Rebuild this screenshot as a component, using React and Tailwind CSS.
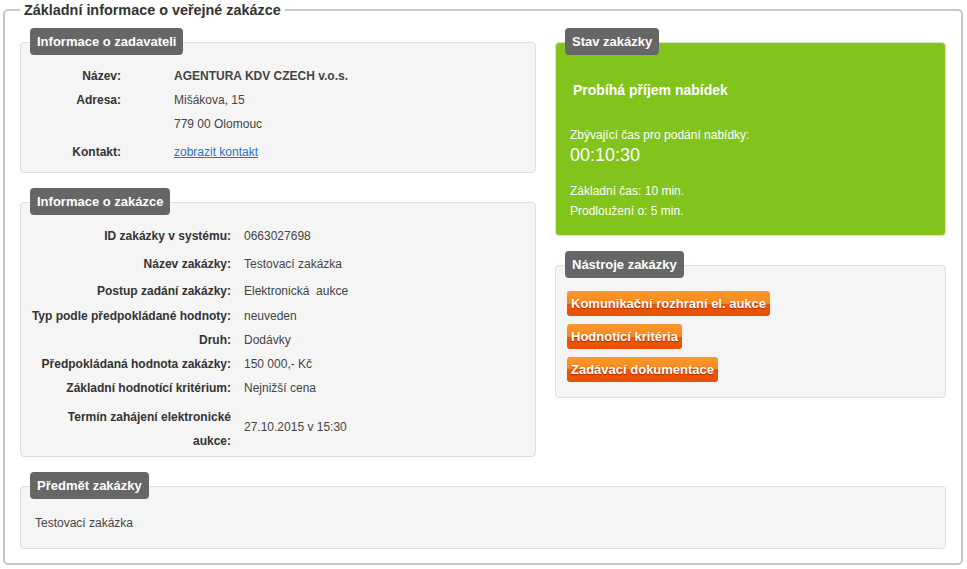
function Tab({ children }) {
  return (
    <div className="-mt-[15px] ml-[9px] block h-[27px] w-fit rounded-[4px] bg-[#666666] px-[7px] text-[13px] font-bold leading-[27px] text-white">
      {children}
    </div>
  );
}

function Panel({ title, className = "", children }) {
  return (
    <div className={`rounded-[4px] border border-[#dfdfdf] bg-[#f5f5f5] ${className}`}>
      <Tab>{title}</Tab>
      {children}
    </div>
  );
}

function Row({ label, children, labelW, gap, className = "" }) {
  return (
    <div className={`flex items-center ${className}`}>
      <div className={`shrink-0 text-right font-bold text-[#333] ${labelW}`}>{label}</div>
      <div className={`text-[#444] ${gap}`}>{children}</div>
    </div>
  );
}

function Btn({ children }) {
  return (
    <div className="h-[25px] w-fit rounded-[3px] bg-[linear-gradient(to_bottom,#fa9a2c_0%,#f7871f_50%,#ee5705_50%,#ea4f02_100%)] px-[4px] text-[13px] font-bold leading-[25px] text-white [text-shadow:0_1px_1px_rgba(80,20,0,0.55)]">
      {children}
    </div>
  );
}

export default function App() {
  const zadL = "w-[210px]";
  const zadG = "ml-[13px]";
  return (
    <div className="h-[569px] w-[967px] bg-white font-['Liberation_Sans',Arial,sans-serif] text-[12px] text-[#333]">
      <fieldset className="ml-[3px] h-[565px] w-[960px] rounded-[5px] border-2 border-[#c8c8c8] pb-[14px] pl-[15px] pr-[14px]">
        <legend className="px-[4px] text-[14.4px] font-bold leading-[20px] text-[#333]">
          Základní informace o veřejné zakázce
        </legend>
        <div className="mt-[22px] flex gap-[19px]">
          <div className="w-[516px]">
            <Panel title="Informace o zadavateli" className="h-[131px]">
              <div className="mt-[9px] leading-[24px]">
                <Row label="Název:" labelW="w-[100px]" gap="ml-[53px] font-bold text-[#333]">
                  AGENTURA KDV CZECH v.o.s.
                </Row>
                <Row label="Adresa:" labelW="w-[100px]" gap="ml-[53px]">
                  Mišákova, 15
                </Row>
                <Row label="" labelW="w-[100px]" gap="ml-[53px]">
                  779 00 Olomouc
                </Row>
                <Row label="Kontakt:" labelW="w-[100px]" gap="ml-[53px]" className="mt-[4px]">
                  <a href="#" className="text-[#2f6fd0] underline">zobrazit kontakt</a>
                </Row>
              </div>
            </Panel>
            <Panel title="Informace o zakázce" className="mt-[29px] h-[255px]">
              <div className="mt-[7px] leading-[24px]">
                <Row label="ID zakázky v systému:" labelW={zadL} gap={zadG} className="h-[28px]">
                  0663027698
                </Row>
                <Row label="Název zakázky:" labelW={zadL} gap={zadG} className="h-[27px]">
                  Testovací zakázka
                </Row>
                <Row label="Postup zadání zakázky:" labelW={zadL} gap={zadG} className="h-[27px]">
                  Elektronická&nbsp; aukce
                </Row>
                <Row label="Typ podle předpokládané hodnoty:" labelW={zadL} gap={zadG} className="h-[24px]">
                  neuveden
                </Row>
                <Row label="Druh:" labelW={zadL} gap={zadG} className="h-[24px]">
                  Dodávky
                </Row>
                <Row label="Předpokládaná hodnota zakázky:" labelW={zadL} gap={zadG} className="h-[24px]">
                  150 000,- Kč
                </Row>
                <Row label="Základní hodnotící kritérium:" labelW={zadL} gap={zadG} className="h-[24px]">
                  Nejnižší cena
                </Row>
                <Row
                  label={<>Termín zahájení elektronické<br />aukce:</>}
                  labelW={zadL}
                  gap={`${zadG} -mt-[4px]`}
                  className="mt-[5px]"
                >
                  27.10.2015 v 15:30
                </Row>
              </div>
            </Panel>
          </div>
          <div className="w-[391px]">
            <div className="h-[194px] rounded-[4px] border border-[#d6e9b8] bg-[#82c31c] text-white">
              <Tab>Stav zakázky</Tab>
              <div className="mt-[25px] pl-[17px] text-[14px] font-bold leading-[20px]">Probíhá příjem nabídek</div>
              <div className="mt-[26px] pl-[14px] leading-[18px]">Zbývající čas pro podání nabídky:</div>
              <div className="pl-[14px] text-[18px] leading-[22px]">00:10:30</div>
              <div className="mt-[15px] pl-[14px] leading-[20px]">Základní čas: 10 min.</div>
              <div className="pl-[14px] leading-[20px]">Prodloužení o: 5 min.</div>
            </div>
            <Panel title="Nástroje zakázky" className="mt-[29px] h-[133px]">
              <div className="mt-[13px] flex flex-col gap-[8px] pl-[11px]">
                <Btn>Komunikační rozhraní el. aukce</Btn>
                <Btn>Hodnotící kritéria</Btn>
                <Btn>Zadávací dokumentace</Btn>
              </div>
            </Panel>
          </div>
        </div>
        <Panel title="Předmět zakázky" className="mt-[29px] h-[63px] w-[926px]">
          <div className="mt-[15px] pl-[14px] leading-[18px] text-[#444]">Testovací zakázka</div>
        </Panel>
      </fieldset>
    </div>
  );
}
